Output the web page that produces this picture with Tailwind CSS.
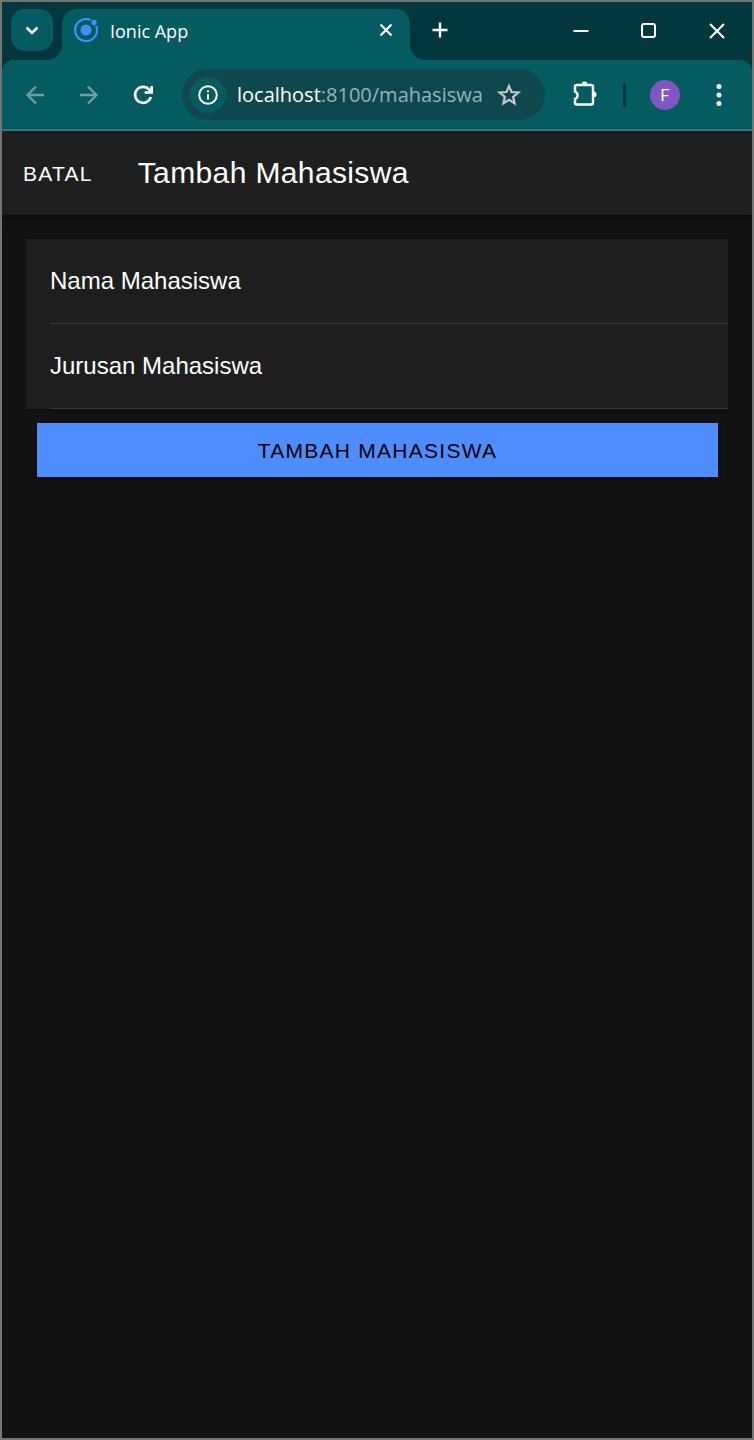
<!DOCTYPE html>
<html lang="id">
<head>
<meta charset="utf-8">
<meta name="viewport" content="width=device-width, initial-scale=1">
<title>Ionic App</title>
<script src="https://cdn.jsdelivr.net/npm/@tailwindcss/browser@4"></script>
</head>
<body class="flex min-h-screen flex-col border-2 border-[#757575] bg-[#121212] font-['Liberation_Sans',Arial,sans-serif] text-white">
  <div class="bg-[#02383d] font-['Open_Sans','Noto_Sans',sans-serif]">
    <!-- Tab strip -->
    <div class="flex h-[58px] items-end pl-[9px]">
      <button aria-label="Cari tab" class="mb-[9px] flex size-[42px] items-center justify-center rounded-[14px] bg-[#045b60]">
        <svg class="size-4" viewBox="0 0 16 16" fill="none" stroke="#fff" stroke-width="2.6"><path d="M2.5 5.5 8 11l5.5-5.5"/></svg>
      </button>
      <div class="relative ml-[9px] flex h-[51px] w-[348px] items-center rounded-t-[15px] bg-[#045b60] pr-4 pb-[9px] pl-3">
        <svg class="absolute bottom-0 -left-[15px] size-[15px]" viewBox="0 0 15 15" fill="#045b60"><path d="M15 0A15 15 0 0 1 0 15H15Z"/></svg>
        <svg class="absolute -right-[15px] bottom-0 size-[15px]" viewBox="0 0 15 15" fill="#045b60"><path d="M0 0A15 15 0 0 0 15 15H0Z"/></svg>
        <svg class="size-6 shrink-0" viewBox="0 0 24 24" fill="#478aff"><circle cx="12" cy="12" r="5.5"/><circle cx="20" cy="4.500" r="2.700"/><path d="M16.500 2A11 11 0 1 0 22.300 8" fill="none" stroke="#478aff" stroke-width="2.200"/></svg>
        <span class="ml-3 flex-1 pt-0.5 text-[18px] leading-6">Ionic App</span>
        <button aria-label="Tutup tab" class="flex size-4 items-center justify-center"><svg class="size-4" viewBox="0 0 16 16" fill="none" stroke="#fff" stroke-width="2.2"><path d="m2.500 2.500 11 11m0-11-11 11"/></svg></button>
      </div>
      <button aria-label="Tab baru" class="mb-[21px] ml-[21px] size-[18px]"><svg class="size-[18px]" viewBox="0 0 18 18" fill="none" stroke="#fff" stroke-width="2.4"><path d="M9 1.500v15M1.500 9h15"/></svg></button>
      <div class="mr-[26px] mb-5 ml-auto flex gap-[50px]">
        <button aria-label="Kecilkan" class="size-[18px]"><svg class="size-[18px]" viewBox="0 0 18 18" stroke="#fff" stroke-width="2"><path d="M1.500 9h15"/></svg></button>
        <button aria-label="Besarkan" class="size-[18px]"><svg class="size-[18px]" viewBox="0 0 18 18" fill="none" stroke="#fff" stroke-width="2"><rect x="2" y="2" width="13" height="13" rx="2"/></svg></button>
        <button aria-label="Tutup" class="size-[18px]"><svg class="size-[18px]" viewBox="0 0 18 18" fill="none" stroke="#fff" stroke-width="2"><path d="m2 2 14 14m0-14L2 16"/></svg></button>
      </div>
    </div>
    <!-- Navigation bar -->
    <div class="flex h-[71px] items-center rounded-t-xl border-b-2 border-[#3b8185] bg-[#045b60] pr-[26px] pl-[22px]">
      <div class="flex items-center gap-7">
        <button aria-label="Kembali" class="size-[26px]"><svg class="size-[26px]" viewBox="0 0 26 26" fill="none" stroke="#6fa0a3" stroke-width="2.3"><path d="M20 13H3.500M12 4.500 3.500 13l8.500 8.500"/></svg></button>
        <button aria-label="Maju" class="size-[26px]"><svg class="size-[26px]" viewBox="0 0 26 26" fill="none" stroke="#6fa0a3" stroke-width="2.3"><path d="M2 13h16.500M10 4.500l8.500 8.500-8.500 8.500"/></svg></button>
        <button aria-label="Muat ulang" class="size-[26px]"><svg class="size-[26px]" viewBox="0 0 26 26" fill="none" stroke="#fff" stroke-width="2.6"><path d="M18.800 15A8 8 0 1 1 17.300 7.800L19.500 10M19.700 4v6.500h-7"/></svg></button>
      </div>
      <div class="ml-6 flex h-[51px] min-w-0 flex-1 items-center rounded-full bg-[#0e484e] pr-6 pl-2">
        <button aria-label="Informasi situs" class="flex size-9 shrink-0 items-center justify-center rounded-full bg-[#045b60]">
          <svg class="size-5" viewBox="0 0 20 20" fill="none" stroke="#fff" stroke-width="2"><circle cx="10" cy="10" r="8.800"/><path d="M10 9v5.500M10 5.200v2"/></svg>
        </button>
        <div role="textbox" aria-label="Alamat" contenteditable="true" spellcheck="false" class="ml-[11px] min-w-0 flex-1 text-[20px] leading-7 whitespace-nowrap text-[#96b3b5] outline-none"><span class="text-white">localhost</span>:8100/mahasiswa</div>
        <button aria-label="Tandai halaman" class="size-6 shrink-0"><svg class="size-6" viewBox="0 0 24 24" fill="none" stroke="#c7c7c7" stroke-width="2.2"><path d="m12 3 2.500 6 6.800.5-5.200 4.300 1.600 6.600L12 16.900l-5.700 3.500L7.900 13.800 2.700 9.500l6.800-.5Z"/></svg></button>
      </div>
      <button aria-label="Ekstensi" class="ml-[26px] size-7 shrink-0"><svg class="size-7" viewBox="0 0 28 28" fill="none" stroke="#fff" stroke-width="2.400"><path d="M5.500 4H20q2 0 2 2v16q0 1.500-2 1.500H5.500q-1.500 0-1.500-1.500V18a4 4 0 0 0 0-7.500V5.500Q4 4 5.500 4Z"/><path d="M10.500 3.500a3 3 0 0 1 6 0ZM22.500 10.500a3 3 0 0 1 0 6Z" fill="#fff" stroke="none"/></svg></button>
      <div class="ml-6 h-6 w-[3px] rounded-sm bg-[#02383d]"></div>
      <button aria-label="Profil" class="ml-6 size-[30px] shrink-0 rounded-full bg-[#7e57c2] font-['Roboto',sans-serif] text-[17px] leading-[30px]">F</button>
      <button aria-label="Menu" class="ml-[30px] h-6 w-4 shrink-0"><svg class="h-6 w-4" viewBox="0 0 16 24" fill="#fff"><circle cx="9" cy="3.500" r="2.500"/><circle cx="9" cy="12" r="2.500"/><circle cx="9" cy="20.500" r="2.500"/></svg></button>
    </div>
  </div>

  <header class="flex h-[84px] items-center bg-[#1f1f1f] pl-[21px] shadow-[0_2px_6px_rgba(0,0,0,0.5)]">
    <button class="pt-px text-[21px] leading-7 font-normal tracking-[0.06em]">BATAL</button>
    <h1 class="ml-[45px] text-[30px] leading-9 tracking-[0.0125em]">Tambah Mahasiswa</h1>
  </header>

  <main class="flex-1 p-6">
    <form>
      <div class="bg-[#1e1e1e] pl-6 text-[24px] leading-7">
        <div class="flex h-[85px] items-center border-b border-[#363636]">
          <label for="nama">Nama Mahasiswa</label>
          <input id="nama" type="text" class="ml-6 h-full min-w-0 flex-1 bg-transparent outline-none">
        </div>
        <div class="flex h-[85px] items-center border-b border-[#363636]">
          <label for="jurusan">Jurusan Mahasiswa</label>
          <input id="jurusan" type="text" class="ml-6 h-full min-w-0 flex-1 bg-transparent outline-none">
        </div>
      </div>
      <div class="pt-[14px] pr-[10px] pl-[11px]">
        <button type="button" class="h-[54px] w-full bg-[#4d8dff] pt-0.5 text-[21px] leading-7 tracking-[0.06em] text-black shadow-[0_2px_3px_rgba(0,0,0,0.5)]">TAMBAH MAHASISWA</button>
      </div>
    </form>
  </main>
</body>
</html>
